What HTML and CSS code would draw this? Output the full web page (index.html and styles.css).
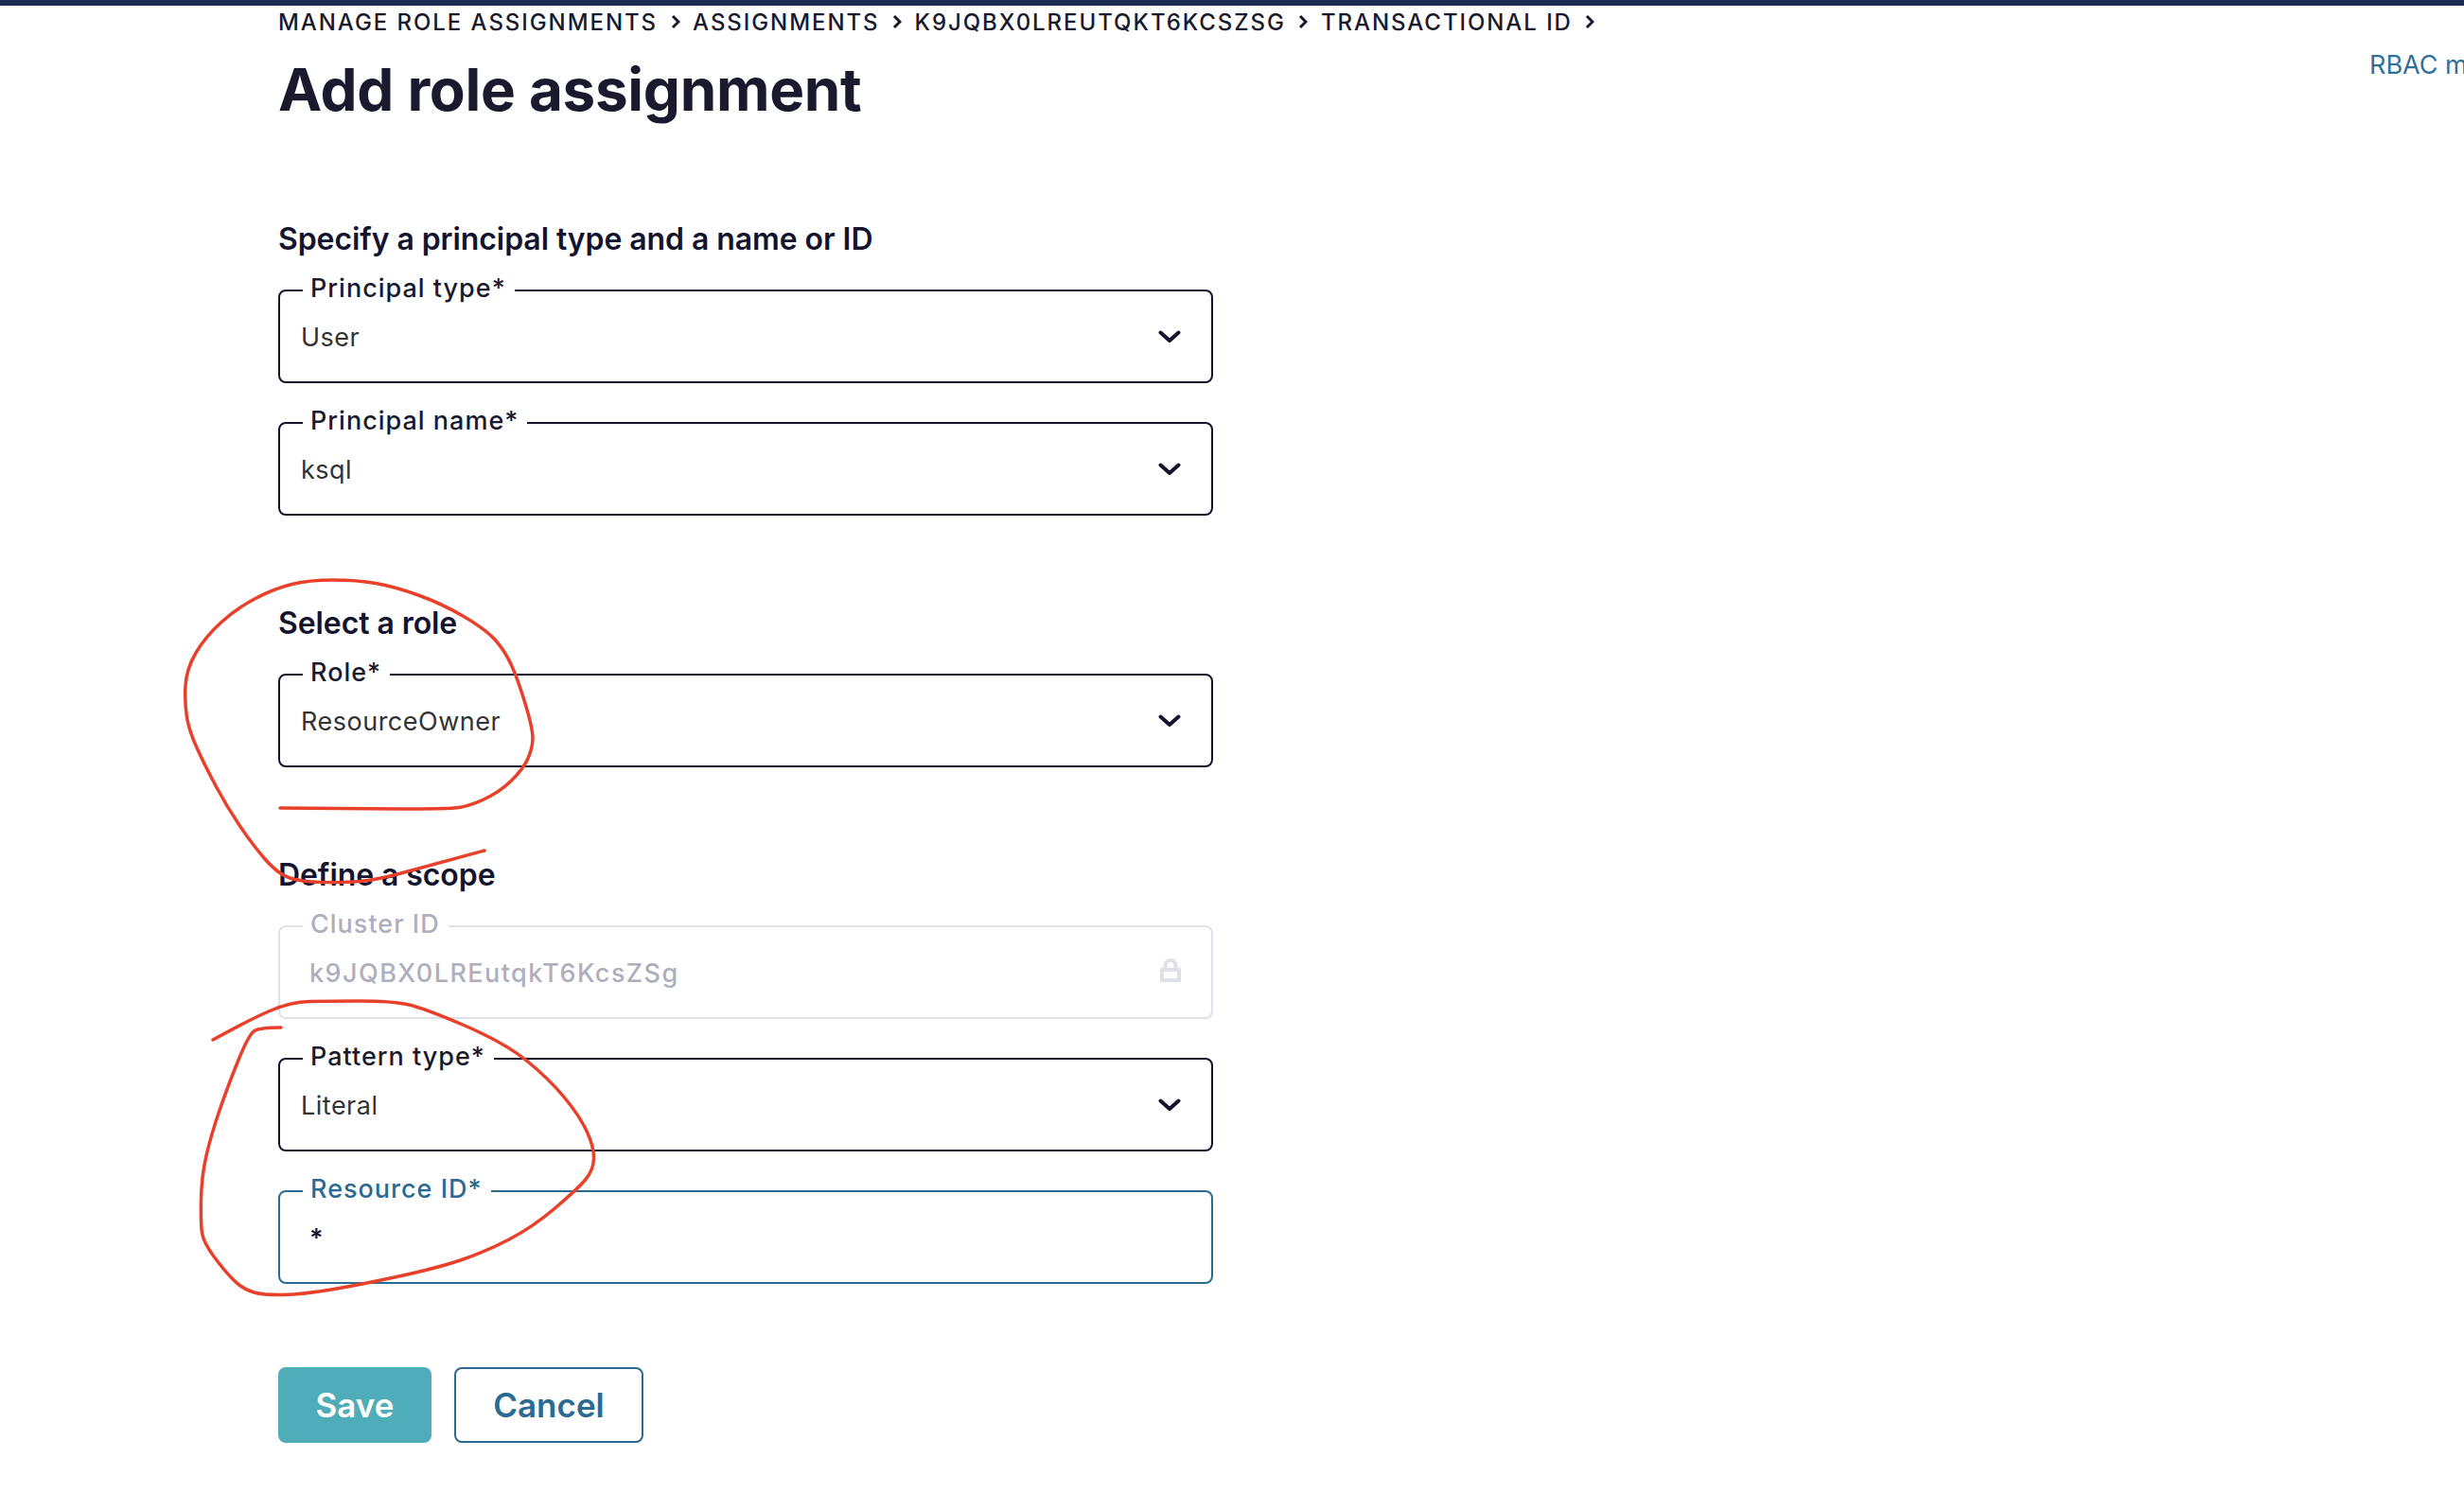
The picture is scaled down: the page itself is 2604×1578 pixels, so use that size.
FILE: index.html
```html
<!DOCTYPE html>
<html lang="en">
<head>
    <meta charset="UTF-8">
    <title>Add role assignment</title>
    <link rel="stylesheet" href="styles.css">
</head>
<body>
    <div class="topbar"></div>
    <div class="page">
        <nav class="breadcrumb">
            <span>Manage role assignments</span>
            <svg class="crumb-icon" viewBox="0 0 10 16"><path d="M2 2l6 6-6 6"/></svg>
            <span>Assignments</span>
            <svg class="crumb-icon" viewBox="0 0 10 16"><path d="M2 2l6 6-6 6"/></svg>
            <span>k9JQBX0LREutqkT6KcsZSg</span>
            <svg class="crumb-icon" viewBox="0 0 10 16"><path d="M2 2l6 6-6 6"/></svg>
            <span>Transactional ID</span>
            <svg class="crumb-icon" viewBox="0 0 10 16"><path d="M2 2l6 6-6 6"/></svg>
        </nav>
        <div class="title-row">
            <h1>Add role assignment</h1>
            <a class="docs-link" href="#">RBAC m</a>
        </div>

        <form class="form">
            <h2 class="section-title">Specify a principal type and a name or ID</h2>
            <fieldset class="field">
                <legend>Principal type*</legend>
                <div class="field-row">
                    <span>User</span>
                    <svg class="chevron" viewBox="0 0 24 14"><path d="M2.5 2.5L12 11l9.5-8.500"/></svg>
                </div>
            </fieldset>
            <fieldset class="field">
                <legend>Principal name*</legend>
                <div class="field-row">
                    <span>ksql</span>
                    <svg class="chevron" viewBox="0 0 24 14"><path d="M2.5 2.5L12 11l9.5-8.500"/></svg>
                </div>
            </fieldset>

            <h2 class="section-title spaced">Select a role</h2>
            <fieldset class="field">
                <legend>Role*</legend>
                <div class="field-row">
                    <span>ResourceOwner</span>
                    <svg class="chevron" viewBox="0 0 24 14"><path d="M2.5 2.5L12 11l9.5-8.500"/></svg>
                </div>
            </fieldset>

            <h2 class="section-title spaced">Define a scope</h2>
            <fieldset class="field disabled">
                <legend>Cluster ID</legend>
                <div class="field-row text-input">
                    <span>k9JQBX0LREutqkT6KcsZSg</span>
                    <svg class="lock" viewBox="0 0 22 25"><path d="M2 12h18v11H2zM5.500 12V7.500a5.500 5.500 0 0 1 11 0V12"/></svg>
                </div>
            </fieldset>
            <fieldset class="field">
                <legend>Pattern type*</legend>
                <div class="field-row">
                    <span>Literal</span>
                    <svg class="chevron" viewBox="0 0 24 14"><path d="M2.5 2.5L12 11l9.5-8.500"/></svg>
                </div>
            </fieldset>
            <fieldset class="field focused">
                <legend>Resource ID*</legend>
                <div class="field-row text-input">
                    <span class="typed">*</span>
                </div>
            </fieldset>

            <div class="actions">
                <button type="button" class="btn btn-primary">Save</button>
                <button type="button" class="btn btn-outline">Cancel</button>
            </div>
        </form>
    </div>

    <!-- hand drawn marks on top of the screenshot -->
    <svg class="scribbles" viewBox="0 0 2604 1578">
        <path d="M512 899L420 924Q397 930 380 931.500Q363 933 340 932.500Q317 932 305 927.500Q293 923 280 908Q267 893 253.500 873Q240 853 228.500 831.500Q217 810 208.500 791.500Q200 773 197.500 758Q195 743 196 725Q197 707 207 690Q217 673 233.500 658Q250 643 270 632.500Q290 622 308.500 617.500Q327 613 352 613Q377 613 397 616.500Q417 620 442 629Q467 638 490 651.500Q513 665 523 676Q533 687 540 702Q547 717 555 743.500Q563 770 563 780Q563 790 558 801.500Q553 813 540 825.500Q527 838 510 845.500Q493 853 480 854Q467 855 425 855L296 854"/>
        <path d="M225 1099Q263 1078 285 1068.500Q307 1059 327 1058.500Q347 1058 380 1058Q413 1058 430 1061.500Q447 1065 490 1083.500Q533 1102 556.500 1121Q580 1140 596.500 1160Q613 1180 620.500 1196.500Q628 1213 627.500 1225Q627 1237 618.500 1247Q610 1257 586.500 1277Q563 1297 538 1310Q513 1323 488 1331.500Q463 1340 421.500 1349Q380 1358 350 1363Q320 1368 300 1368.500Q280 1369 268.500 1366Q257 1363 247 1353Q237 1343 226 1328Q215 1313 213.500 1303Q212 1293 212.500 1268Q213 1243 218 1221.500Q223 1200 231.500 1175Q240 1150 251.500 1121.500Q263 1093 269 1089.500Q275 1086 297 1086"/>
    </svg>
</body>
</html>
```

FILE: styles.css
```css
* {
    box-sizing: border-box;
}

html, body {
    height: 100%;
}

body {
    margin: 0;
    overflow: hidden;
    position: relative;
    background-color: #fff;
    color: #14142f;
    font-family: Inter, 'Noto Sans', sans-serif;
}

.topbar {
    height: 6px;
    background-color: #1b2e52;
}

.page {
    padding-left: 294px;
}

.breadcrumb {
    display: flex;
    align-items: center;
    height: 32px;
    margin-top: 1px;
    gap: 13.5px;
    font-size: 24px;
    font-weight: 500;
    letter-spacing: 1.93px;
    text-transform: uppercase;
    color: #1a1a2e;
}

.crumb-icon {
    width: 10px;
    height: 16px;
    fill: none;
    stroke: #1a1a2e;
    stroke-width: 3;
}

.title-row {
    display: flex;
    align-items: flex-start;
    margin-top: 20px;
}

h1 {
    margin: 0;
    width: 2210px;
    flex-shrink: 0;
    font-size: 62px;
    line-height: 72px;
    font-weight: 700;
    letter-spacing: -0.33px;
    color: #1a1a2e;
}

.docs-link {
    margin-top: -10px;
    font-size: 27px;
    line-height: 40px;
    color: #2f7098;
    text-decoration: none;
    white-space: nowrap;
}

.form {
    width: 988px;
    margin-top: 102px;
}

.section-title {
    margin: 0 0 16px;
    font-size: 32px;
    line-height: 40px;
    font-weight: 600;
    letter-spacing: -0.08px;
}

.section-title.spaced {
    margin-top: 94px;
}

.field {
    display: block;
    height: 116px;
    margin: 0 0 24px;
    padding: 0 32px 0 22px;
    min-width: 0;
    border: 2px solid #14142f;
    border-radius: 8px;
}

.field:last-of-type {
    margin-bottom: 0;
}

.field legend {
    margin-left: 2px;
    padding: 0 9px 4px 8px;
    font-size: 27px;
    line-height: 32px;
    font-weight: 500;
    letter-spacing: 1px;
    color: #1a1a2e;
}

.field-row {
    display: flex;
    justify-content: space-between;
    align-items: center;
    height: 40px;
    margin-top: 11px;
    font-size: 27px;
    letter-spacing: 0.5px;
    color: #333;
}

.text-input {
    padding-left: 9px;
}

.chevron {
    width: 24px;
    height: 14px;
    fill: none;
    stroke: #14142f;
    stroke-width: 4;
    stroke-linecap: round;
    stroke-linejoin: round;
}

.lock {
    width: 22px;
    height: 25px;
    margin-top: -6px;
    fill: none;
    stroke: #e0e0e8;
    stroke-width: 4;
}

.disabled {
    border-color: #e0e0e8;
}

.disabled legend,
.disabled .field-row {
    color: #aeaebd;
}

.disabled .field-row {
    font-weight: 500;
    letter-spacing: 1.45px;
}

.focused {
    border-color: #2b6a92;
}

.focused legend {
    color: #2b6a92;
}

.typed {
    font-weight: 600;
    color: #14142f;
}

.actions {
    display: flex;
    gap: 24px;
    margin-top: 88px;
}

.btn {
    height: 80px;
    padding: 0;
    border-radius: 8px;
    font-family: inherit;
    font-size: 35px;
    font-weight: 600;
    cursor: pointer;
}

.btn-primary {
    width: 162px;
    background-color: #4fadb9;
    border: none;
    color: #fff;
}

.btn-outline {
    width: 200px;
    background-color: #fff;
    border: 2px solid #2b6a92;
    color: #2b6a92;
}

.scribbles {
    position: absolute;
    top: 0;
    left: 0;
    width: 2604px;
    height: 1578px;
    fill: none;
    stroke: #e8402a;
    stroke-width: 3.5;
    stroke-linecap: round;
    pointer-events: none;
}
```
